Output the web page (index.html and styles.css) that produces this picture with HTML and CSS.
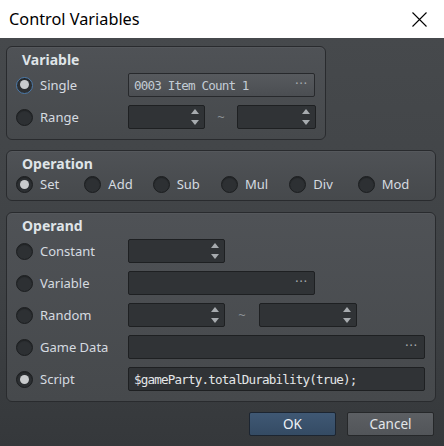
FILE: index.html
```html
<!DOCTYPE html>
<html lang="en">

<head>
  <meta charset="UTF-8">
  <meta name="viewport" content="width=device-width, initial-scale=1.0">
  <title>Control Variables</title>
  <link rel="stylesheet" href="styles.css">
</head>

<body>
  <div class="dialog">
    <div class="titlebar">
      <span class="title">Control Variables</span>
      <svg class="close" width="15" height="15" viewBox="0 0 15 15">
        <path d="M0.5 0.5 L14.5 14.5 M14.5 0.5 L0.5 14.5" stroke="#000" stroke-width="1.1" fill="none" />
      </svg>
    </div>

    <div class="content">
      <!-- 变量 -->
      <div class="group group-var">
        <div class="group-title">Variable</div>
        <div class="rows">
          <div class="row">
            <label class="opt"><span class="radio checked focus"></span>Single</label>
            <div class="field light w187"><span class="mono">0003 Item Count 1</span><span class="dots">···</span></div>
          </div>
          <div class="row">
            <label class="opt"><span class="radio"></span>Range</label>
            <div class="spin w76"><span class="arrows"><i class="up"></i><i class="down"></i></span></div>
            <span class="tilde">~</span>
            <div class="spin w78"><span class="arrows"><i class="up"></i><i class="down"></i></span></div>
          </div>
        </div>
      </div>

      <!-- 运算 -->
      <div class="group group-op">
        <div class="group-title">Operation</div>
        <div class="ops">
          <label class="opt op"><span class="radio checked"></span>Set</label>
          <label class="opt op"><span class="radio"></span>Add</label>
          <label class="opt op"><span class="radio"></span>Sub</label>
          <label class="opt op"><span class="radio"></span>Mul</label>
          <label class="opt op"><span class="radio"></span>Div</label>
          <label class="opt op"><span class="radio"></span>Mod</label>
        </div>
      </div>

      <!-- 操作数 -->
      <div class="group group-operand">
        <div class="group-title">Operand</div>
        <div class="rows">
          <div class="row">
            <label class="opt"><span class="radio"></span>Constant</label>
            <div class="spin w97"><span class="arrows"><i class="up"></i><i class="down"></i></span></div>
          </div>
          <div class="row">
            <label class="opt"><span class="radio"></span>Variable</label>
            <div class="field w187"><span class="mono"></span><span class="dots">···</span></div>
          </div>
          <div class="row">
            <label class="opt"><span class="radio"></span>Random</label>
            <div class="spin w97"><span class="arrows"><i class="up"></i><i class="down"></i></span></div>
            <span class="tilde wide">~</span>
            <div class="spin w98"><span class="arrows"><i class="up"></i><i class="down"></i></span></div>
          </div>
          <div class="row">
            <label class="opt"><span class="radio"></span>Game Data</label>
            <div class="field w297"><span class="mono"></span><span class="dots">···</span></div>
          </div>
          <div class="row">
            <label class="opt"><span class="radio checked"></span>Script</label>
            <div class="field w297"><span class="mono script">$gameParty.totalDurability(true);</span></div>
          </div>
        </div>
      </div>

      <div class="buttons">
        <button class="btn ok">OK</button>
        <button class="btn">Cancel</button>
      </div>
    </div>
  </div>
</body>

</html>
```

FILE: styles.css
```css
* {
  margin: 0;
  padding: 0;
  box-sizing: border-box;
}

body {
  width: 444px;
  height: 446px;
  overflow: hidden;
  font-family: "Noto Sans", "Open Sans", sans-serif;
  font-size: 13px;
  color: #d6dbe0;
}

.dialog {
  width: 444px;
  height: 446px;
  display: flex;
  flex-direction: column;
}

.titlebar {
  height: 38px;
  flex: none;
  background: #fff;
  display: flex;
  align-items: center;
  justify-content: space-between;
  padding: 0 17px 1px 9px;
}

.title {
  font-size: 16.3px;
  color: #000;
}

.close {
  display: block;
  margin-top: 1px;
}

.content {
  flex: 1;
  background: linear-gradient(#46494c, #3f4245 60%, #35383b);
  padding: 8px 9px 0 6px;
  display: flex;
  flex-direction: column;
}

/* 分组框 */
.group {
  border: 1px solid #292b2e;
  border-radius: 6px;
  background: linear-gradient(#4f5256, #46494c);
  box-shadow: inset 0 1px 0 rgba(255, 255, 255, .04);
  padding: 5px 9px 0;
}

.group-var {
  width: 320px;
  height: 94px;
}

.group-op {
  width: 430px;
  height: 51px;
  margin-top: 10px;
}

.group-operand {
  width: 430px;
  height: 190px;
  margin-top: 11px;
}

.group-title {
  height: 16px;
  line-height: 16px;
  font-size: 14px;
  font-weight: bold;
  color: #dfe4e8;
  padding-left: 6px;
}

.rows {
  margin-top: 5px;
  display: flex;
  flex-direction: column;
  gap: 8px;
}

.row {
  height: 24px;
  display: flex;
  align-items: center;
}

.opt {
  display: flex;
  align-items: center;
  gap: 7px;
  width: 112px;
  height: 17px;
  line-height: 17px;
  white-space: nowrap;
}

/* 单选按钮 */
.radio {
  flex: none;
  width: 17px;
  height: 17px;
  border-radius: 50%;
  background: #2d3033;
  border: 1px solid #1c1e20;
  box-shadow: inset 0 1px 1px rgba(0, 0, 0, .3);
  position: relative;
}

.radio.checked::after {
  content: "";
  position: absolute;
  left: 3px;
  top: 3px;
  width: 9px;
  height: 9px;
  border-radius: 50%;
  background: #c9cbcd;
}

.radio.focus {
  border: 1.5px solid #4d7bab;
}

.radio.focus::after {
  left: 2.5px;
  top: 2.5px;
}

.ops {
  margin-top: 4px;
  display: flex;
}

.op {
  width: 70px;
}

/* 输入框 */
.field,
.spin {
  height: 24px;
  border: 1px solid #1e2022;
  border-radius: 2px;
  background: #303336;
  display: flex;
  align-items: center;
  justify-content: space-between;
  padding: 0 6px 0 5px;
}

.field.light {
  background: linear-gradient(#575a5e, #4b4e52);
  border-color: #27292c;
}

.w76 { width: 77px; }
.w78 { width: 79px; }
.w97 { width: 97px; }
.w98 { width: 98px; }
.w187 { width: 187px; }
.w297 { width: 297px; }

.mono {
  font-family: "DejaVu Sans Mono", "Liberation Mono", monospace;
  font-size: 12.6px;
  letter-spacing: -0.84px;
  color: #c3ccd5;
  white-space: nowrap;
}

.mono.script {
  color: #e4e6e8;
}

.dots {
  color: #a9adb1;
  font-size: 12px;
  letter-spacing: 1px;
  line-height: 1;
  margin-top: -2px;
}

.spin {
  justify-content: flex-end;
  padding-right: 5px;
}

.arrows {
  display: flex;
  flex-direction: column;
  gap: 6px;
}

.arrows i {
  display: block;
  width: 0;
  height: 0;
  border-left: 4.5px solid transparent;
  border-right: 4.5px solid transparent;
}

.arrows .up {
  border-bottom: 5px solid #a7abaf;
}

.arrows .down {
  border-top: 5px solid #a7abaf;
}

.tilde {
  width: 32px;
  text-align: center;
  color: #8e9398;
  font-size: 13px;
}

.tilde.wide {
  width: 34px;
}

/* 按钮 */
.buttons {
  margin-top: 10px;
  display: flex;
  justify-content: flex-end;
  gap: 11px;
  padding-right: 1px;
}

.btn {
  width: 87px;
  height: 24px;
  border: 1px solid #26282a;
  border-radius: 2px;
  background: linear-gradient(#5c5f63, #525559);
  color: #e3e6e9;
  font-family: "Noto Sans", "Open Sans", sans-serif;
  font-size: 13.5px;
}

.btn.ok {
  background: linear-gradient(#3f5874, #344b64);
  border-color: #1c2531;
  color: #eef2f6;
}
```
